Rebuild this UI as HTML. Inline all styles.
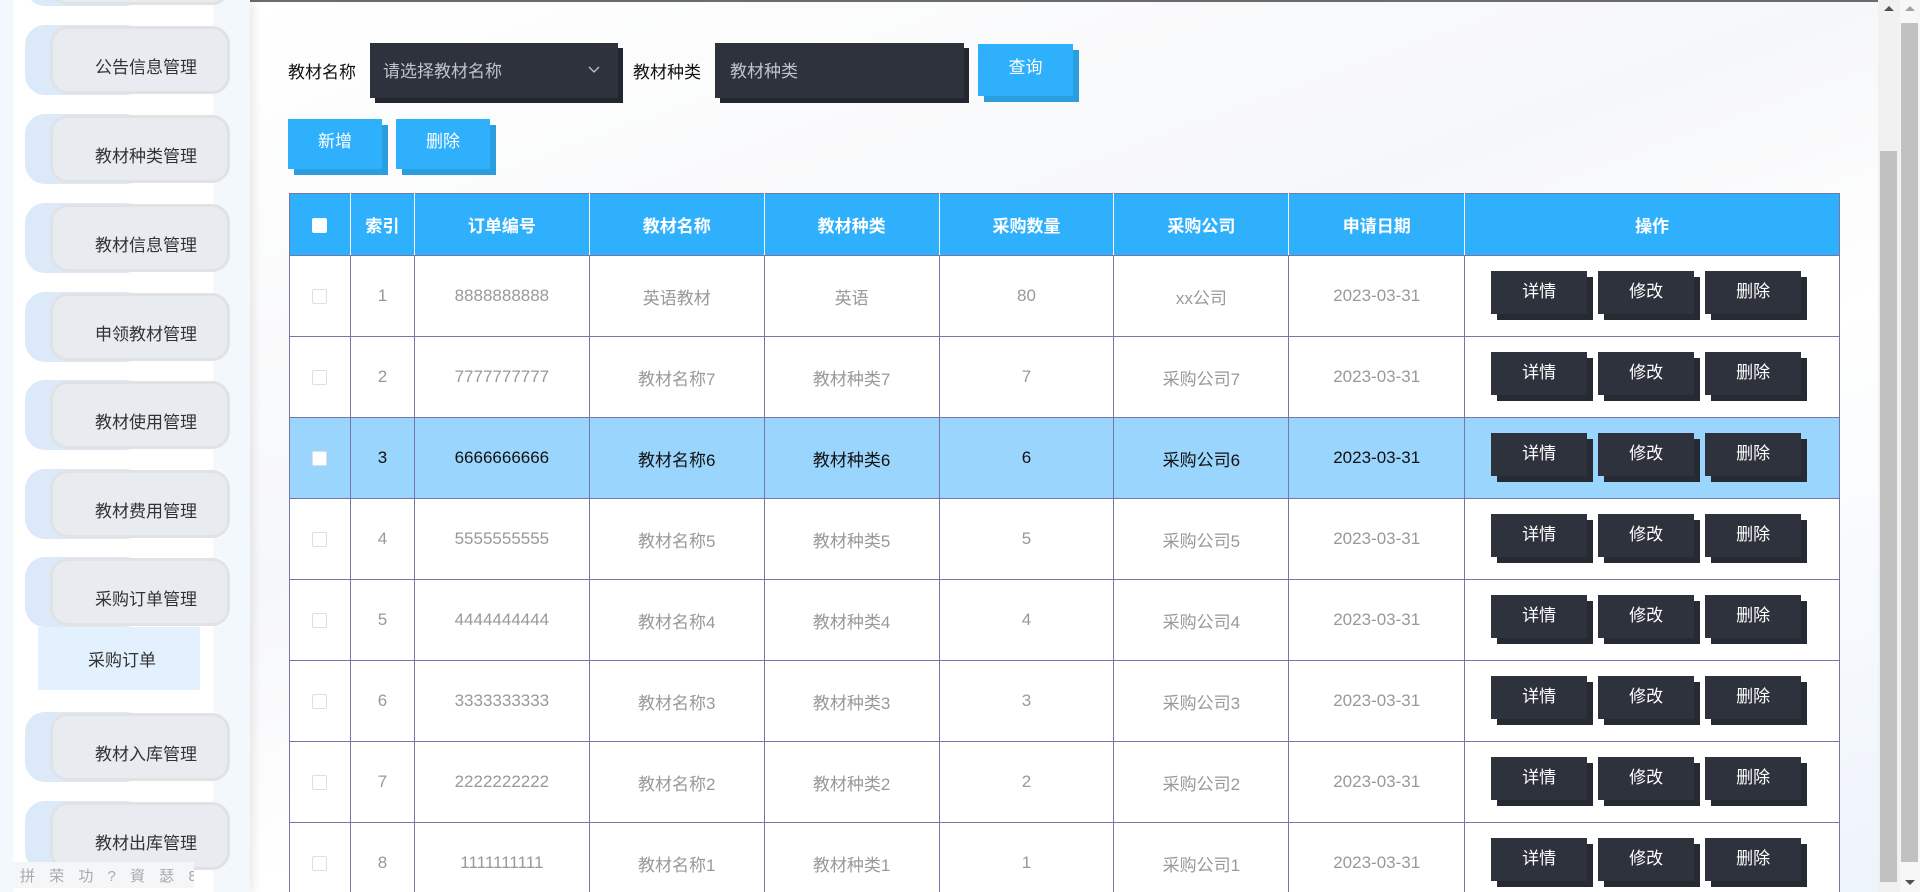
<!DOCTYPE html>
<html><head><meta charset="utf-8"><style>
*{box-sizing:border-box;margin:0;padding:0}
html,body{width:1920px;height:892px;overflow:hidden}
body{position:relative;background:#fbfbfc;font-family:"Liberation Sans","Noto Sans CJK SC",sans-serif;}
#root{position:absolute;left:0;top:0;width:1920px;height:892px;overflow:hidden}
.a{position:absolute}
.topline{left:0;top:0;width:1878px;height:2px;background:#6b6b6b}
.side{left:0;top:0;width:250px;height:892px;background:#f3f8fd;box-shadow:4px 0 8px rgba(0,0,0,.08)}
.sw{left:13px;top:0;width:200px;height:892px;background:#fff}
.it{left:25px;width:205px;height:70px}
.it .o{position:absolute;left:0;top:0;width:120px;height:70px;background:#dce9f9;border-radius:20px}
.it .i{position:absolute;left:25px;top:1px;width:180px;height:68px;background:#e8ebf0;border:3px solid #e1e2e4;border-radius:18px;font-size:17px;color:#333;padding:24px 0 0 42px;white-space:nowrap}
.sub{left:38px;top:627px;width:162px;height:63px;background:#e3f0fd;font-size:17px;color:#333;padding:19px 0 0 50px}
.lbl{font-size:17px;color:#111}
.dk{background:#2e323d;color:#c0c4cc;font-size:17px;box-shadow:5px 5px 0 #22262e}
.bl{background:#2fb0fc;color:#fff;font-size:17px;text-align:center;box-shadow:6px 6px 0 #2b9ee0}
table{position:absolute;left:289px;top:193px;width:1551px;border-collapse:collapse;background:#fff}
td,th{border:1px solid #7a74a8;text-align:center;font-size:17px;color:#999;font-weight:normal}
th{background:#2fb0fc;color:#fff;font-weight:bold;height:62px;border-left-color:#fff;border-right-color:#fff;border-top-color:#7a74a8}
th:first-child{border-left-color:#7a74a8}th:last-child{border-right-color:#7a74a8}
td{height:81px}
tr.hl td{background:#99d5fd;color:#111}
.cb{display:inline-block;width:15px;height:15px;border:1px solid #dcdfe6;border-radius:2px;background:#fff;vertical-align:middle}
th .cb{border:none}
td:last-child{text-align:left;padding-left:26px}
.ob{display:inline-block;width:96px;height:43px;line-height:41px;text-align:center;background:#2e323d;color:#fff;font-size:17px;box-shadow:6px 6px 0 #252a33;margin-right:11px;vertical-align:middle;position:relative;top:-4px}
.trk{left:1878px;top:0;width:22px;height:892px;background:#f1f1f1}
.trk2{left:1900px;top:0;width:20px;height:892px;background:#f7f7f7}
</style></head><body><div id="root">
<div class="a" style="left:250px;top:0;width:1628px;height:892px;background:linear-gradient(160deg,#fff 0%,#f6f7f9 40%,#fff 60%,#eef4fb 100%)"></div>
<div class="a topline"></div>
<div class="a side"></div>
<div class="a sw"></div>
<div class="a it" style="top:-64px"><div class="o"></div><div class="i"></div></div>
<div class="a it" style="top:25px"><div class="o"></div><div class="i">公告信息管理</div></div>
<div class="a it" style="top:114px"><div class="o"></div><div class="i">教材种类管理</div></div>
<div class="a it" style="top:203px"><div class="o"></div><div class="i">教材信息管理</div></div>
<div class="a it" style="top:292px"><div class="o"></div><div class="i">申领教材管理</div></div>
<div class="a it" style="top:380px"><div class="o"></div><div class="i">教材使用管理</div></div>
<div class="a it" style="top:469px"><div class="o"></div><div class="i">教材费用管理</div></div>
<div class="a it" style="top:557px"><div class="o"></div><div class="i">采购订单管理</div></div>
<div class="a sub">采购订单</div>
<div class="a it" style="top:712px"><div class="o"></div><div class="i">教材入库管理</div></div>
<div class="a it" style="top:801px"><div class="o"></div><div class="i">教材出库管理</div></div>
<div class="a" style="left:12px;top:862px;width:182px;height:26px;background:#f4f6f8;color:#aaa;font-size:15px;padding:3px 8px;letter-spacing:5px;white-space:nowrap;overflow:hidden">拼 荣 功 ? 資 瑟 8</div>

<div class="a lbl" style="left:288px;top:58px">教材名称</div>
<div class="a dk" style="left:370px;top:43px;width:248px;height:55px;padding:14px 13px">请选择教材名称<svg class="a" style="right:18px;top:23px" width="12" height="8" viewBox="0 0 12 8"><path d="M1 1l5 5 5-5" fill="none" stroke="#c0c4cc" stroke-width="1.3"/></svg></div>
<div class="a lbl" style="left:633px;top:58px">教材种类</div>
<div class="a dk" style="left:715px;top:43px;width:249px;height:55px;padding:14px 15px">教材种类</div>
<div class="a bl" style="left:978px;top:44px;width:95px;height:52px;line-height:48px">查询</div>
<div class="a bl" style="left:288px;top:119px;width:94px;height:50px;line-height:46px">新增</div>
<div class="a bl" style="left:396px;top:119px;width:94px;height:50px;line-height:46px">删除</div>

<table>
<colgroup><col style="width:61px"><col style="width:64px"><col style="width:175px"><col style="width:175px"><col style="width:175px"><col style="width:175px"><col style="width:175px"><col style="width:176px"><col style="width:375px"></colgroup>
<tr><th><span class="cb"></span></th><th>索引</th><th>订单编号</th><th>教材名称</th><th>教材种类</th><th>采购数量</th><th>采购公司</th><th>申请日期</th><th style="text-align:center;padding:0">操作</th></tr>
<tr><td><span class="cb"></span></td><td>1</td><td>8888888888</td><td>英语教材</td><td>英语</td><td>80</td><td>xx公司</td><td>2023-03-31</td><td><span class="ob">详情</span><span class="ob">修改</span><span class="ob">删除</span></td></tr>
<tr><td><span class="cb"></span></td><td>2</td><td>7777777777</td><td>教材名称7</td><td>教材种类7</td><td>7</td><td>采购公司7</td><td>2023-03-31</td><td><span class="ob">详情</span><span class="ob">修改</span><span class="ob">删除</span></td></tr>
<tr class="hl"><td><span class="cb"></span></td><td>3</td><td>6666666666</td><td>教材名称6</td><td>教材种类6</td><td>6</td><td>采购公司6</td><td>2023-03-31</td><td><span class="ob">详情</span><span class="ob">修改</span><span class="ob">删除</span></td></tr>
<tr><td><span class="cb"></span></td><td>4</td><td>5555555555</td><td>教材名称5</td><td>教材种类5</td><td>5</td><td>采购公司5</td><td>2023-03-31</td><td><span class="ob">详情</span><span class="ob">修改</span><span class="ob">删除</span></td></tr>
<tr><td><span class="cb"></span></td><td>5</td><td>4444444444</td><td>教材名称4</td><td>教材种类4</td><td>4</td><td>采购公司4</td><td>2023-03-31</td><td><span class="ob">详情</span><span class="ob">修改</span><span class="ob">删除</span></td></tr>
<tr><td><span class="cb"></span></td><td>6</td><td>3333333333</td><td>教材名称3</td><td>教材种类3</td><td>3</td><td>采购公司3</td><td>2023-03-31</td><td><span class="ob">详情</span><span class="ob">修改</span><span class="ob">删除</span></td></tr>
<tr><td><span class="cb"></span></td><td>7</td><td>2222222222</td><td>教材名称2</td><td>教材种类2</td><td>2</td><td>采购公司2</td><td>2023-03-31</td><td><span class="ob">详情</span><span class="ob">修改</span><span class="ob">删除</span></td></tr>
<tr><td><span class="cb"></span></td><td>8</td><td>1111111111</td><td>教材名称1</td><td>教材种类1</td><td>1</td><td>采购公司1</td><td>2023-03-31</td><td><span class="ob">详情</span><span class="ob">修改</span><span class="ob">删除</span></td></tr>
</table>

<div class="a trk"></div>
<div class="a" style="left:1880px;top:151px;width:17px;height:731px;background:#c1c1c1"></div>
<div class="a" style="left:1884px;top:6px;width:0;height:0;border-left:5px solid transparent;border-right:5px solid transparent;border-bottom:5px solid #505050"></div>
<div class="a trk2"></div>
<div class="a" style="left:1901px;top:23px;width:17px;height:839px;background:#c1c1c1"></div>
<div class="a" style="left:1905px;top:6px;width:0;height:0;border-left:5px solid transparent;border-right:5px solid transparent;border-bottom:5px solid #a3a3a3"></div>
<div class="a" style="left:1905px;top:880px;width:0;height:0;border-left:5px solid transparent;border-right:5px solid transparent;border-top:5px solid #505050"></div>
</div></body></html>
